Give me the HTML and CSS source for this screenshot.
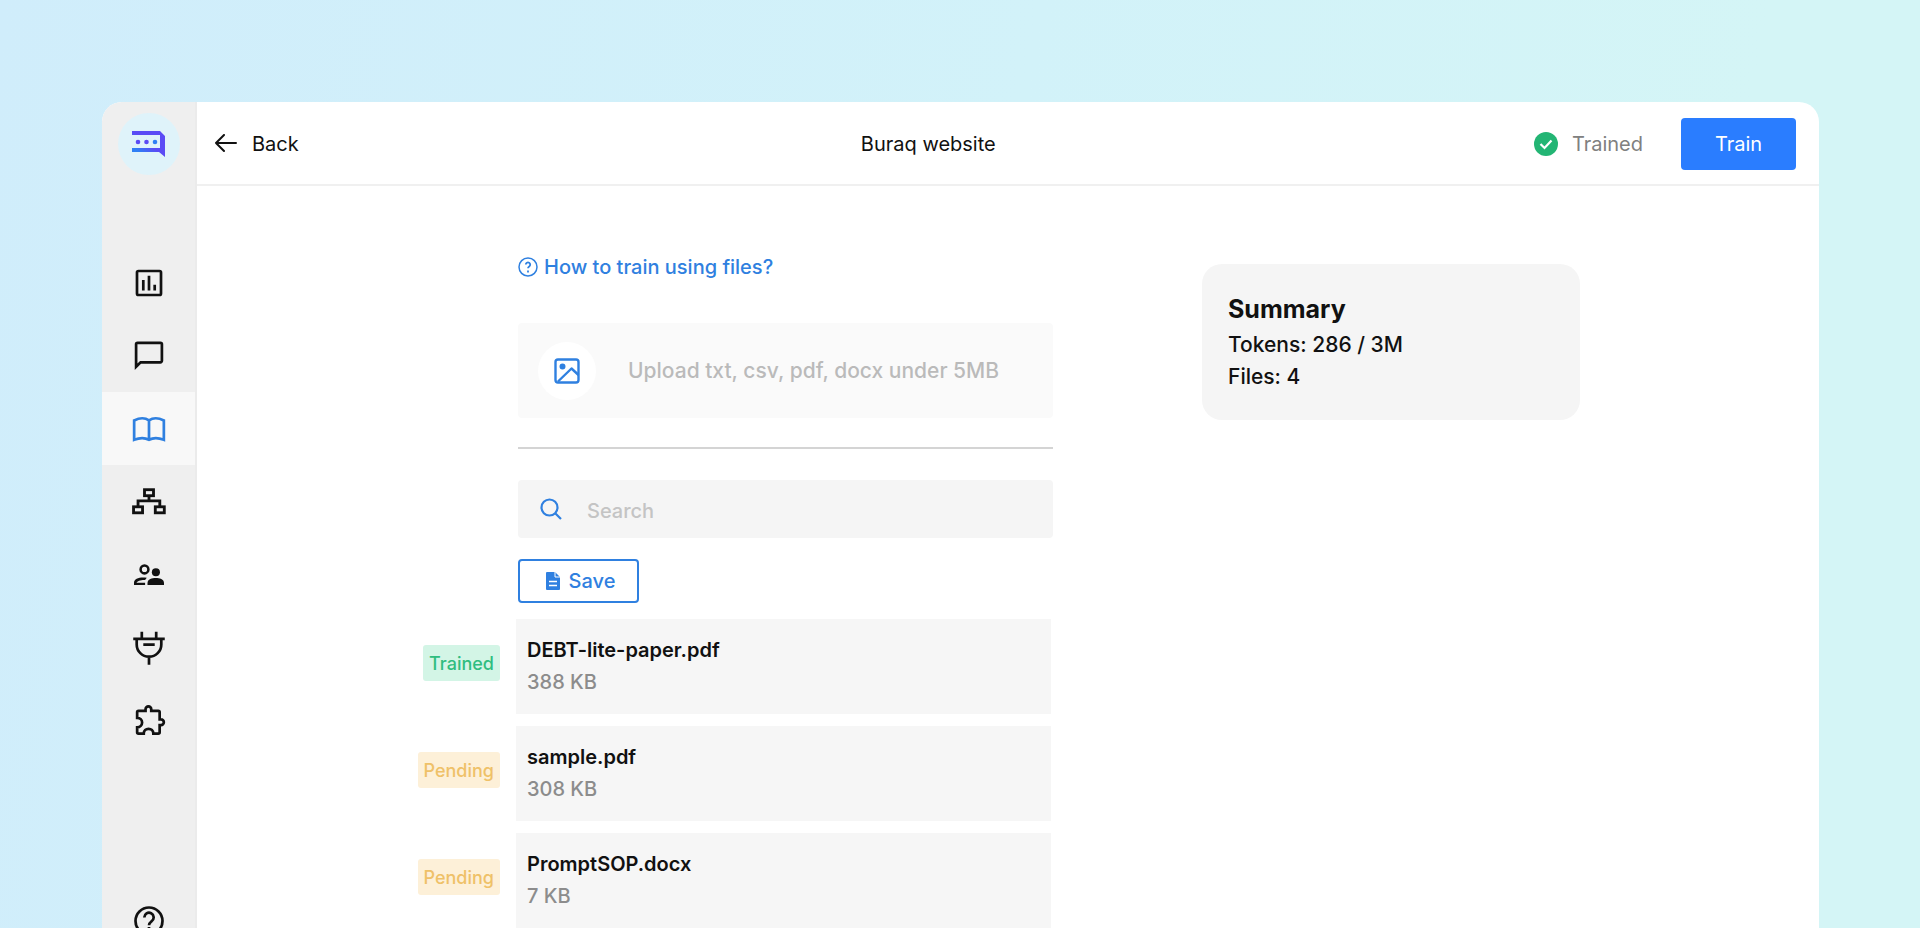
FILE: index.html
```html
<!DOCTYPE html>
<html lang="en">
<head>
  <meta charset="UTF-8" />
  <meta name="viewport" content="width=device-width, initial-scale=1.0" />
  <title>Buraq website</title>
  <link rel="stylesheet" href="styles.css">
</head>
<body>

  <div class="window">
    <nav class="sidebar">
      <a href="#" class="logo" aria-label="Home">
        <svg width="34" height="26" viewBox="0 0 34 26">
          <defs>
            <linearGradient id="logoFill" x1="0" y1="1" x2="1" y2="0">
              <stop offset="0.2" stop-color="#2f80f5" />
              <stop offset="0.5" stop-color="#5a4bf5" />
            </linearGradient>
          </defs>
          <path d="M0 0h28l5 5v21l-6-5H0v-4h28V4H0z" fill="url(#logoFill)" />
          <circle cx="6" cy="11" r="2.3" fill="#5a4bf5" />
          <circle cx="14.5" cy="11" r="2.3" fill="#5a4bf5" />
          <circle cx="23" cy="11" r="2.3" fill="#2f80f5" />
        </svg>
      </a>

      <a href="#" class="nav-item" aria-label="Analytics">
        <svg width="36" height="36" viewBox="0 0 24 24" fill="none" stroke="currentColor" stroke-width="1.8">
          <rect x="4" y="4" width="16" height="16" rx="1" />
          <path d="M8.2 10v7M12 7.2v9.8M15.8 13.2v3.8" />
        </svg>
      </a>
      <a href="#" class="nav-item" aria-label="Conversations">
        <svg width="36" height="36" viewBox="0 0 24 24" fill="none" stroke="currentColor" stroke-width="1.8">
          <path d="M3.4 19.2V4.2a1 1 0 0 1 1-1h15.2a1 1 0 0 1 1 1v11a1 1 0 0 1-1 1H6.4z" />
        </svg>
      </a>
      <a href="#" class="nav-item active" aria-label="Knowledge base">
        <svg width="36" height="36" viewBox="0 0 24 24" fill="none" stroke="currentColor" stroke-width="1.8">
          <path d="M12 6.3v12.9M12 6.3C9.5 4.5 5.5 4.6 2.1 6.3v12.9C5.5 17.8 9.5 17.8 12 19.2c2.5-1.4 6.5-1.4 9.9 0V6.3C18.5 4.6 14.5 4.5 12 6.3z" />
        </svg>
      </a>
      <a href="#" class="nav-item" aria-label="Flows">
        <svg width="36" height="36" viewBox="0 0 24 24" fill="none" stroke="currentColor" stroke-width="1.9">
          <rect x="9" y="3.8" width="6" height="4" />
          <rect x="1.7" y="15.2" width="6" height="4" />
          <rect x="16.2" y="15.2" width="6" height="4" />
          <path d="M12 7.800v3.400M4.700 15.200v-4h14.500v4" />
        </svg>
      </a>
      <a href="#" class="nav-item" aria-label="Team">
        <svg width="36" height="36" viewBox="0 0 24 24" fill="currentColor">
          <circle cx="9" cy="8.3" r="2.6" fill="none" stroke="currentColor" stroke-width="1.7" />
          <circle cx="16.600" cy="10.200" r="2.700" />
          <path d="M11 18.700v-1.400c0-2.500 3-3.300 5.500-3.300s5.500.8 5.500 3.300v1.400z" />
          <path d="M2 18.700v-1.600c0-2.700 4-4 8.500-3.300l-1.100 1.500c-2.800-.1-5.400.7-5.700 1.800h5.700v1.600z" />
        </svg>
      </a>
      <a href="#" class="nav-item" aria-label="Integrations">
        <svg width="36" height="36" viewBox="0 0 24 24" fill="none" stroke="currentColor" stroke-width="1.8">
          <path d="M7.2 1.2v4.600M16.800 1.200v4.600M1.500 5.900h21M3.800 5.900v3.700a8.200 8.200 0 0 0 16.400 0V5.900M12 17.700v5.500M8.200 9.800h7.600" />
        </svg>
      </a>
      <a href="#" class="nav-item" aria-label="Plugins">
        <svg width="36" height="36" viewBox="0 0 24 24" fill="none" stroke="currentColor" stroke-width="1.8">
          <path d="M5 5.200h4.700V4.100a1.900 1.900 0 0 1 3.800 0v1.100h4.700a.9.9 0 0 1 .9.9v4.800h.9a1.900 1.900 0 0 1 0 3.800h-.9v4.800a.9.9 0 0 1-.9.9h-3.300c0-2-1.500-3.200-3.200-3.200s-3.200 1.200-3.200 3.200H5a.9.9 0 0 1-.9-.9v-3.300c2 0 3.300-1.500 3.300-3.200S6.100 9.900 4.100 9.900V6.100a.9.9 0 0 1 .9-.9z" />
        </svg>
      </a>
      <a href="#" class="nav-item help" aria-label="Help">
        <svg width="36" height="36" viewBox="0 0 24 24" fill="none" stroke="currentColor" stroke-width="1.8">
          <circle cx="12" cy="12" r="9" />
          <path d="M8.9 9.600a3.100 3.100 0 1 1 4.900 2.500c-1 .8-1.800 1.300-1.800 2.700M12 16v2" />
        </svg>
      </a>
    </nav>

    <main class="main">
      <header class="topbar">
        <button type="button" class="back">
          <svg width="24" height="20" viewBox="0 0 24 20" fill="none" stroke="currentColor" stroke-width="2" stroke-linecap="round" stroke-linejoin="round">
            <path d="M22 9H2M10 1L2 9l8 8" />
          </svg>
          Back
        </button>
        <h1>Buraq website</h1>
        <div class="topbar-right">
          <span class="status">
            <svg width="24" height="24" viewBox="0 0 24 24">
              <circle cx="12" cy="12" r="12" fill="#23b574" />
              <path d="M6.5 12l4 4 7-7.500" fill="none" stroke="#fff" stroke-width="2.200" />
            </svg>
            Trained
          </span>
          <button type="button" class="train">Train</button>
        </div>
      </header>

      <div class="content">
        <section class="files">
          <a href="#" class="how-to">
            <svg width="20" height="20" viewBox="0 0 20 20" fill="none" stroke="currentColor" stroke-width="1.5">
              <circle cx="10" cy="10" r="9" />
              <path d="M7.8 7.600a2.200 2.200 0 1 1 3.400 1.900c-.8.500-1.200.900-1.200 1.800M10 13.500v2" stroke-width="1.800" />
            </svg>
            How to train using files?
          </a>

          <label class="upload">
            <input type="file" class="upload-input" accept=".txt,.csv,.pdf,.docx" />
            <span class="upload-icon">
              <svg width="26" height="26" viewBox="0 0 26 26" fill="none" stroke="currentColor" stroke-width="2.400" stroke-linejoin="round">
                <rect x="1.500" y="1.500" width="23" height="23" rx="2.500" />
                <circle cx="8.500" cy="8.500" r="1.800" fill="currentColor" />
                <path d="M4 23.500L17.500 10.500l7 6.500" />
              </svg>
            </span>
            Upload txt, csv, pdf, docx under 5MB
          </label>

          <hr />

          <div class="search">
            <svg width="22" height="22" viewBox="0 0 22 22" fill="none" stroke="currentColor" stroke-width="2.200">
              <circle cx="9.500" cy="9.500" r="8" />
              <path d="M15 15l6 6" />
            </svg>
            <input type="search" placeholder="Search" aria-label="Search" />
          </div>

          <button type="button" class="save">
            <svg width="14" height="18" viewBox="0 0 14 18">
              <path d="M1 0h8l5 5v12a1 1 0 0 1-1 1H1a1 1 0 0 1-1-1V1a1 1 0 0 1 1-1z" fill="currentColor" />
              <path d="M3 9.500h8M3 13.500h8" stroke="#fff" stroke-width="1.500" />
              <path d="M9 0v5h5" fill="none" stroke="#fff" />
            </svg>
            Save
          </button>

          <ul class="file-list">
            <li class="file">
              <span class="badge trained">Trained</span>
              <span class="file-name">DEBT-lite-paper.pdf</span>
              <span class="file-size">388 KB</span>
            </li>
            <li class="file">
              <span class="badge pending">Pending</span>
              <span class="file-name">sample.pdf</span>
              <span class="file-size">308 KB</span>
            </li>
            <li class="file">
              <span class="badge pending">Pending</span>
              <span class="file-name">PromptSOP.docx</span>
              <span class="file-size">7 KB</span>
            </li>
          </ul>
        </section>

        <aside class="summary">
          <h2>Summary</h2>
          <p>Tokens: 286 / 3M</p>
          <p>Files: 4</p>
        </aside>
      </div>
    </main>
  </div>

</body>
</html>
```
FILE: styles.css
```css
* {
  box-sizing: border-box;
}

body {
  margin: 0;
  padding: 102px 101px 0 102px;
  height: 100vh;
  overflow: hidden;
  font-family: Inter, "Liberation Sans", sans-serif;
  font-size: 20px;
  line-height: 32px;
  color: #111;
  background: linear-gradient(100deg, #d0edfb 0%, #d2f2f9 50%, #d4f5f6 85%, #d4f5f6 100%);
}

button,
input {
  font: inherit;
}

button {
  cursor: pointer;
}

svg {
  display: block;
  flex-shrink: 0;
}

.window {
  display: flex;
  min-height: 100vh;
  background: #fff;
  border-radius: 20px;
  overflow: hidden;
}

/* sidebar */
.sidebar {
  width: 95px;
  flex-shrink: 0;
  display: flex;
  flex-direction: column;
  background: #efefef;
  border-right: 2px solid #ebebeb;
}

.logo {
  display: flex;
  align-items: center;
  justify-content: center;
  width: 62px;
  height: 62px;
  margin: 11px auto 71px;
  border-radius: 50%;
  background: #dff3fa;
}

.nav-item {
  display: flex;
  align-items: center;
  justify-content: center;
  height: 73px;
  color: #111;
}

.nav-item.active {
  color: #2f80e0;
  background: #f8f8f8;
}

.nav-item.help {
  margin-top: 127px;
}

/* top bar */
.main {
  flex: 1;
}

.topbar {
  display: flex;
  align-items: center;
  justify-content: space-between;
  height: 84px;
  padding: 2px 23px 0 17px;
  border-bottom: 2px solid #f0f0f0;
}

.back {
  display: flex;
  align-items: center;
  gap: 14px;
  padding: 0 24px 0 0;
  border: none;
  background: none;
  color: inherit;
}

h1 {
  margin: 0;
  font-size: 20px;
  line-height: 32px;
  font-weight: 400;
}

.topbar-right {
  display: flex;
  align-items: center;
  gap: 38px;
}

.status {
  display: flex;
  align-items: center;
  gap: 14px;
  color: #808080;
}

.train {
  width: 115px;
  height: 52px;
  border: none;
  border-radius: 4px;
  background: #2a7dff;
  color: #fff;
}

/* content */
.content {
  display: grid;
  grid-template-columns: 535fr 378fr;
  align-items: start;
  gap: 149px;
  padding: 65px 239px 0 321px;
}

.how-to {
  display: flex;
  align-items: center;
  gap: 6px;
  color: #2f80e0;
  font-weight: 500;
  text-decoration: none;
}

.upload {
  display: flex;
  align-items: center;
  gap: 32px;
  height: 95px;
  margin-top: 40px;
  padding-left: 20px;
  border-radius: 4px;
  background: #fafafa;
  color: #bababa;
  font-size: 21px;
  font-weight: 500;
  cursor: pointer;
}

.upload-input {
  position: absolute;
  opacity: 0;
  width: 1px;
  height: 1px;
}

.upload-icon {
  display: flex;
  align-items: center;
  justify-content: center;
  width: 58px;
  height: 58px;
  border-radius: 50%;
  background: #fff;
  color: #2f80e0;
}

hr {
  height: 2px;
  margin: 29px 0 31px;
  border: none;
  background: #d4d4d4;
}

.search {
  display: flex;
  align-items: center;
  gap: 25px;
  height: 58px;
  padding: 0 22px;
  border-radius: 4px;
  background: #f5f5f5;
  color: #2f80e0;
}

.search input {
  flex: 1;
  padding: 4px 0 0;
  border: none;
  outline: none;
  background: none;
  color: #111;
  font-weight: 500;
}

.search input::placeholder {
  color: #c4c4c4;
}

.save {
  display: flex;
  align-items: center;
  justify-content: center;
  gap: 9px;
  width: 121px;
  height: 44px;
  margin-top: 21px;
  padding: 0 0 0 4px;
  border: 2px solid #2f80e0;
  border-radius: 4px;
  background: #fff;
  color: #2f80e0;
  font-weight: 500;
}

.file-list {
  display: flex;
  flex-direction: column;
  gap: 12px;
  margin: 16px 2px 0 -2px;
  padding: 0;
  list-style: none;
}

.file {
  position: relative;
  display: flex;
  flex-direction: column;
  height: 95px;
  padding: 15px 11px;
  background: #f6f6f6;
}

.file-name {
  font-weight: 600;
}

.file-size {
  color: #8c8c8c;
  font-weight: 500;
}

/* hangs in the left margin of the list */
.badge {
  position: absolute;
  right: calc(100% + 16px);
  top: 26px;
  padding: 3px 6px 1px;
  border-radius: 3px;
  font-size: 18px;
  font-weight: 500;
}

.badge.trained {
  background: #d3f5e6;
  color: #2fbd80;
}

.badge.pending {
  background: #fdf0d8;
  color: #efc168;
}

.summary {
  margin-top: 13px;
  padding: 29px 26px 27px;
  border-radius: 20px;
  background: #f5f5f5;
}

.summary h2 {
  margin: 0 0 4px;
  font-size: 25px;
  line-height: 32px;
}

.summary p {
  margin: 0;
  font-size: 21px;
  font-weight: 500;
}
```
